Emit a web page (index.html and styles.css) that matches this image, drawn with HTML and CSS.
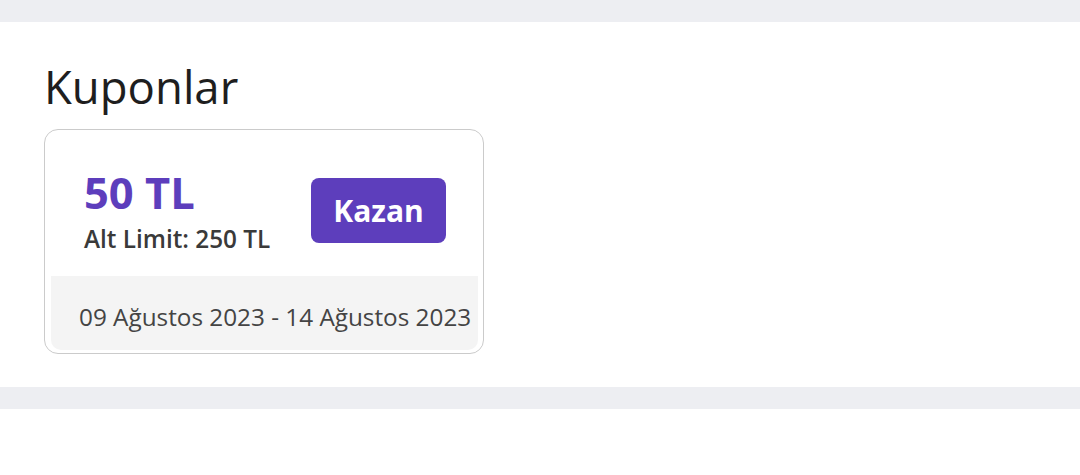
FILE: index.html
```html
<!DOCTYPE html>
<html lang="tr">
<head>
<meta charset="utf-8">
<title>Kuponlar</title>
<link rel="stylesheet" href="styles.css">
</head>
<body>
<div class="divider"></div>
<section class="coupons">
  <h2 class="coupons__title">Kuponlar</h2>
  <div class="coupon">
    <div class="coupon__main">
      <div class="coupon__info">
        <div class="coupon__amount">50 TL</div>
        <div class="coupon__limit">Alt Limit: 250 TL</div>
      </div>
      <button class="coupon__btn">Kazan</button>
    </div>
    <div class="coupon__dates">09 Ağustos 2023 - 14 Ağustos 2023</div>
  </div>
</section>
<div class="divider"></div>
</body>
</html>
```
FILE: styles.css
```css
* { box-sizing: border-box; }
html, body { margin: 0; padding: 0; background: #fff; }
body { font-family: "Open Sans", "Noto Sans", sans-serif; }

.divider { height: 22px; background: #edeef2; }

.coupons { padding: 38px 44px 33px; }

.coupons__title {
  margin: 0 0 16px;
  font-size: 45.5px;
  line-height: 53px;
  font-weight: 400;
  color: #1e1e1e;
}

.coupon {
  width: 440px;
  border: 1px solid #cbcbcb;
  border-radius: 14px;
  padding: 0 5px 3px 6px;
}

.coupon__main {
  display: flex;
  justify-content: space-between;
  align-items: flex-start;
  padding: 41px 32px 21px 33px;
}

.coupon__amount {
  font-size: 43.5px;
  line-height: 44px;
  font-weight: 700;
  color: #5d3ebc;
}

.coupon__limit {
  margin-top: 8px;
  font-size: 24.3px;
  line-height: 32px;
  font-weight: 600;
  color: #3a3a3a;
}

.coupon__btn {
  margin-top: 7px;
  width: 135px;
  height: 65px;
  border: 0;
  border-radius: 8px;
  background: #5d3ebc;
  color: #fff;
  font-family: inherit;
  font-size: 30px;
  font-weight: 700;
  line-height: 65px;
  padding: 0;
}

.coupon__dates {
  background: #f4f4f4;
  border-radius: 0 0 10px 10px;
  padding: 25px 0 17px 28px;
  font-size: 24.3px;
  line-height: 32px;
  color: #444;
  white-space: nowrap;
}
```
